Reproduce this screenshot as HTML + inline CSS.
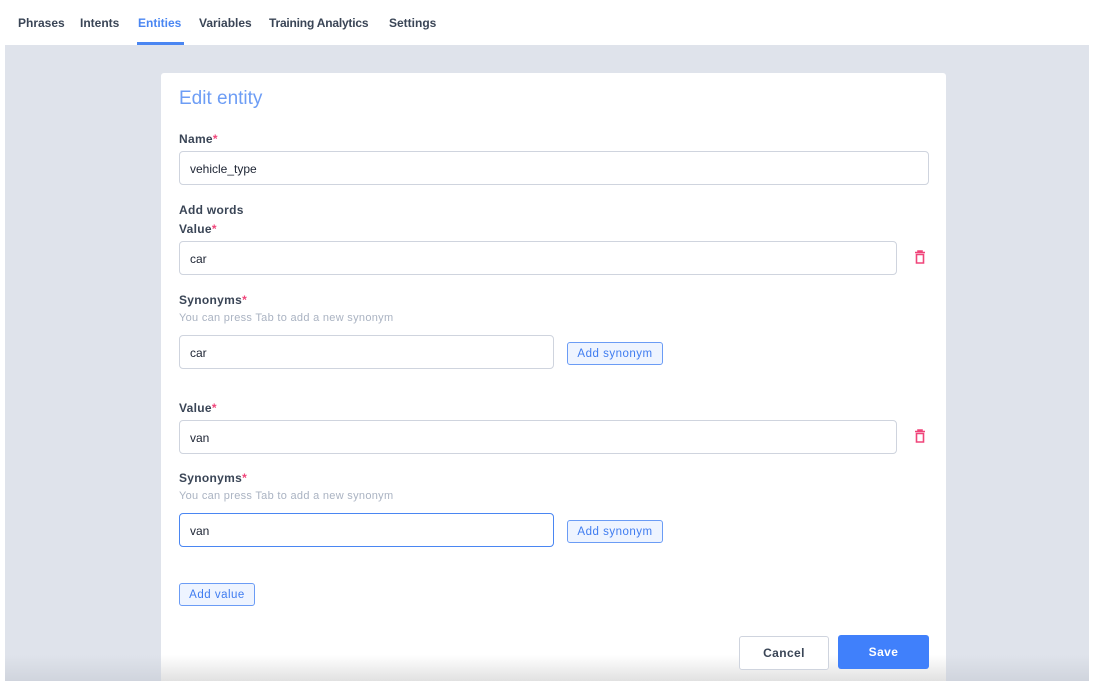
<!DOCTYPE html>
<html><head><meta charset="utf-8"><style>
*{box-sizing:border-box;margin:0;padding:0}
body{width:1096px;height:687px;background:#fff;font-family:"Liberation Sans",sans-serif;position:relative;overflow:hidden;color:#2e3a4d}
.tab{position:absolute;top:16px;font-size:12px;font-weight:bold;color:#3a4556;letter-spacing:0}
.bg{position:absolute;left:5px;top:45px;width:1084px;height:636px;background:#dfe3eb}
.card{position:absolute;left:161px;top:73px;width:785px;height:608px;background:#fff;border-radius:3px}
.lbl{position:absolute;font-size:12px;font-weight:bold;color:#3a4556;letter-spacing:.3px}
.lbl i{color:#f0457a;font-style:normal}
.hint{position:absolute;font-size:11px;color:#aab3c2;letter-spacing:.3px}
.inp{position:absolute;height:34px;border:1px solid #cfd4de;border-radius:4px;font-size:12px;color:#1d2433;padding:10px 10px;line-height:14px}
.btn{position:absolute;height:23px;border:1px solid #6b9cf5;background:#eef4ff;border-radius:3px;color:#3f7cf0;font-size:11.5px;text-align:center;line-height:22px;letter-spacing:.5px}
.trash{position:absolute;width:12px;height:14px}
</style></head><body>
<div class="tab" style="left:18px">Phrases</div>
<div class="tab" style="left:80px">Intents</div>
<div class="tab" style="left:138px;color:#4a86f2">Entities</div>
<div style="position:absolute;left:137px;top:42px;width:47px;height:3px;background:#4a86f2"></div>
<div class="tab" style="left:199px">Variables</div>
<div class="tab" style="left:269px;letter-spacing:-.2px">Training Analytics</div>
<div class="tab" style="left:389px">Settings</div>
<div class="bg"></div>
<div style="position:absolute;left:5px;top:655px;width:1084px;height:26px;background:linear-gradient(rgba(180,185,195,0),rgba(180,185,195,.35))"></div>
<div class="card"></div>
<div style="position:absolute;left:161px;top:655px;width:785px;height:26px;background:linear-gradient(rgba(230,230,230,0),rgba(225,225,225,1))"></div>
<div style="position:absolute;left:179px;top:88px;font-size:19px;color:#6d9df5">Edit entity</div>
<div class="lbl" style="left:179px;top:132px">Name<i>*</i></div>
<div class="inp" style="left:179px;top:151px;width:750px">vehicle_type</div>
<div class="lbl" style="left:179px;top:203px">Add words</div>
<div class="lbl" style="left:179px;top:222px">Value<i>*</i></div>
<div class="inp" style="left:179px;top:241px;width:718px">car</div>
<svg class="trash" style="left:914px;top:250px" viewBox="0 0 12 14"><path d="M1 2.5h10M4 2.5V1h4v1.5M2.5 4.5h7v8.5h-7z" fill="none" stroke="#f0457a" stroke-width="1.6"/></svg>
<div class="lbl" style="left:179px;top:293px">Synonyms<i>*</i></div>
<div class="hint" style="left:179px;top:312px">You can press Tab to add a new synonym</div>
<div class="inp" style="left:179px;top:335px;width:375px">car</div>
<div class="btn" style="left:567px;top:342px;width:96px">Add synonym</div>
<div class="lbl" style="left:179px;top:401px">Value<i>*</i></div>
<div class="inp" style="left:179px;top:420px;width:718px">van</div>
<svg class="trash" style="left:914px;top:429px" viewBox="0 0 12 14"><path d="M1 2.5h10M4 2.5V1h4v1.5M2.5 4.5h7v8.5h-7z" fill="none" stroke="#f0457a" stroke-width="1.6"/></svg>
<div class="lbl" style="left:179px;top:471px">Synonyms<i>*</i></div>
<div class="hint" style="left:179px;top:490px">You can press Tab to add a new synonym</div>
<div class="inp" style="left:179px;top:513px;width:375px;border-color:#4a86f2">van</div>
<div class="btn" style="left:567px;top:520px;width:96px">Add synonym</div>
<div class="btn" style="left:179px;top:583px;width:76px">Add value</div>
<div style="position:absolute;left:739px;top:636px;width:90px;height:34px;border:1px solid #cfd4de;border-radius:3px;background:#fff;text-align:center;line-height:32px;font-size:12px;font-weight:bold;color:#3a4556;letter-spacing:.4px">Cancel</div>
<div style="position:absolute;left:838px;top:635px;width:91px;height:34px;border-radius:3px;background:#4080fb;text-align:center;line-height:34px;font-size:12px;font-weight:bold;color:#fff;letter-spacing:.4px">Save</div>
</body></html>
